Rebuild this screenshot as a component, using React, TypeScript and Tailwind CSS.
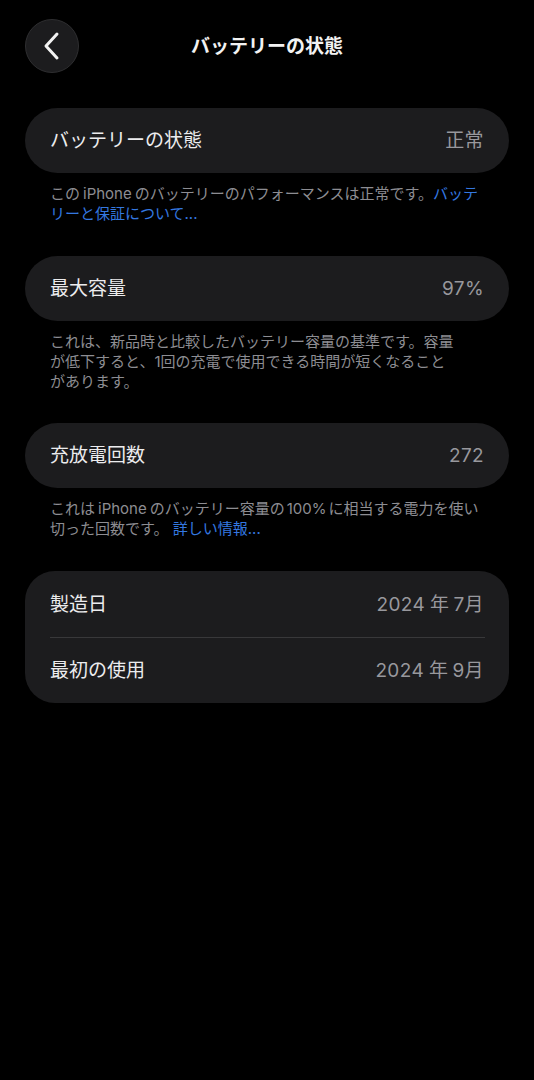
import React from "react";

const font = { fontFamily: 'Inter, "Noto Sans CJK JP", "Noto Sans", sans-serif' };

function Card({ label, value }: { label: string; value: string }) {
  return (
    <div className="mx-[25px] h-[65px] rounded-full bg-[#1c1c1e] px-[25px] flex items-center justify-between">
      <span className="text-[19px] text-[#ececee] leading-none">{label}</span>
      <span className="text-[19px] tracking-[0.02em] text-[#98989d] leading-none">{value}</span>
    </div>
  );
}

function Note({ children }: { children: React.ReactNode }) {
  return (
    <p className="mx-[50px] mt-[11px] text-[15px] leading-[20px] text-[#8d8d92] whitespace-nowrap">
      {children}
    </p>
  );
}

export default function App() {
  return (
    <div className="min-h-[1080px] w-full bg-black pb-10" style={font}>
      <div className="pt-[19px] px-[25px] grid grid-cols-[1fr_auto_1fr] items-center">
        <button className="justify-self-start w-[54px] h-[54px] rounded-full bg-[#1c1c1e] border border-[#2e2e30] flex items-center justify-center">
          <svg width="18" height="30" viewBox="0 0 18 30" fill="none">
            <path d="M14 3 L3 15 L14 27" stroke="#f2f2f2" strokeWidth="3" strokeLinecap="round" strokeLinejoin="round" />
          </svg>
        </button>
        <h1 className="text-[19px] font-bold text-[#f2f2f2] leading-none">バッテリーの状態</h1>
        <div />
      </div>

      <div className="mt-[35px]">
        <Card label="バッテリーの状態" value="正常" />
        <Note>
          この<span className="mx-[3px]">iPhone</span>のバッテリーのパフォーマンスは正常です。<span className="text-[#3478e0]">バッテ</span>
          <br />
          <span className="text-[#3478e0]">リーと保証について...</span>
        </Note>
      </div>

      <div className="mt-[32px]">
        <Card label="最大容量" value="97%" />
        <Note>
          これは、新品時と比較したバッテリー容量の基準です。容量
          <br />
          が低下すると、1回の充電で使用できる時間が短くなること
          <br />
          があります。
        </Note>
      </div>

      <div className="mt-[31px]">
        <Card label="充放電回数" value="272" />
        <Note>
          これは<span className="mx-[3px]">iPhone</span>のバッテリー容量の<span className="mx-[2px]">100%</span>に相当する電力を使い
          <br />
          切った回数です。 <span className="text-[#3478e0]">詳しい情報...</span>
        </Note>
      </div>

      <div className="mt-[32px] mx-[25px] rounded-[30px] bg-[#1c1c1e]">
        <div className="h-[66px] px-[25px] flex items-center justify-between">
          <span className="text-[19px] text-[#ececee] leading-none">製造日</span>
          <span className="text-[19px] tracking-[0.02em] text-[#98989d] leading-none">2024<span className="ml-[5px] mr-[4px]">年</span>7月</span>
        </div>
        <div className="ml-[25px] mr-[24px] h-px bg-[#38383a]" />
        <div className="h-[65px] px-[25px] flex items-center justify-between">
          <span className="text-[19px] text-[#ececee] leading-none">最初の使用</span>
          <span className="text-[19px] tracking-[0.02em] text-[#98989d] leading-none">2024<span className="ml-[5px] mr-[4px]">年</span>9月</span>
        </div>
      </div>
    </div>
  );
}
